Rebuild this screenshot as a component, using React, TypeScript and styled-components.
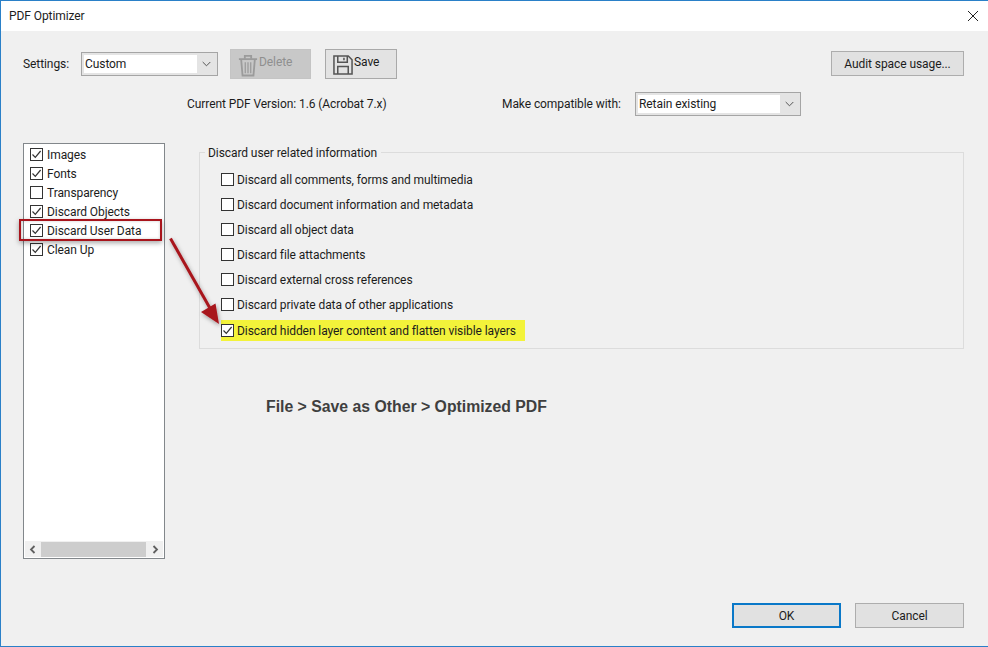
import React from "react";
import styled, { createGlobalStyle } from "styled-components";

const Global = createGlobalStyle`
  html, body { margin: 0; padding: 0; background: #f0f0f0; }
  * { box-sizing: border-box; }
  body { font-family: Roboto, "Noto Sans", sans-serif; font-size: 12px; letter-spacing: -0.08px; color: #1c1c1c; }
`;

const Dialog = styled.div`
  position: relative;
  width: 988px;
  height: 647px;
  background: #f0f0f0;
  border-top: 1px solid #2a80c8;
  border-left: 1px solid #2a80c8;
  border-bottom: 1px solid #2a80c8;
  display: flex;
  flex-direction: column;
  overflow: hidden;
`;
const TitleBar = styled.div`
  height: 30px;
  flex: none;
  background: #fff;
  display: flex;
  align-items: center;
  justify-content: space-between;
  padding: 0 9px 0 8px;
`;
const Title = styled.span`
  font-size: 12px;
`;
const Body = styled.div`
  flex: 1;
  display: flex;
  flex-direction: column;
  padding: 18px 24px 18px 22px;
`;
const TopRow = styled.div`
  height: 30px;
  display: flex;
  align-items: center;
`;
const Label = styled.span<{ $w: number }>`
  width: ${(p) => p.$w}px;
  flex: none;
  white-space: nowrap;
`;
const Select = styled.div<{ $w: number }>`
  width: ${(p) => p.$w}px;
  height: 24px;
  border: 1px solid #a5a5a5;
  background: #e4e4e4;
  padding: 2px;
  display: flex;
  align-items: stretch;
`;
const SelectValue = styled.div`
  flex: 1;
  background: #fff;
  padding-left: 1px;
  display: flex;
  align-items: center;
`;
const SelectArrow = styled.div`
  width: 18px;
  display: flex;
  align-items: center;
  justify-content: center;
`;
const ToolButton = styled.div<{ $w: number; $off?: boolean; $gap: number }>`
  width: ${(p) => p.$w}px;
  height: 30px;
  margin-left: ${(p) => p.$gap}px;
  border: 1px solid ${(p) => (p.$off ? "#c4c4c4" : "#a9a9a9")};
  background: ${(p) => (p.$off ? "#c8c8c8" : "#e3e3e3")};
  color: ${(p) => (p.$off ? "#8f8f8f" : "#1c1c1c")};
  display: flex;
  align-items: flex-start;
  padding: 4px 0 0 7px;
`;
const ToolText = styled.span`
  line-height: 16px;
  margin-left: 1px;
`;
const PushButton = styled.div<{ $w: number; $default?: boolean }>`
  width: ${(p) => p.$w}px;
  height: 25px;
  border: ${(p) => (p.$default ? "2px solid #0a78c8" : "1px solid #adadad")};
  background: #e1e1e1;
  display: flex;
  align-items: center;
  justify-content: center;
`;
const AuditSlot = styled.div`
  margin-left: auto;
  margin-top: -1px;
`;
const VersionRow = styled.div`
  height: 24px;
  margin-top: 13px;
  display: flex;
  align-items: center;
  padding-left: 164px;
`;
const Main = styled.div`
  flex: none;
  margin-top: 27px;
  height: 416px;
  display: flex;
  align-items: flex-start;
`;
const ListBox = styled.div`
  width: 142px;
  height: 416px;
  flex: none;
  background: #fff;
  border: 1px solid #82878b;
  display: flex;
  flex-direction: column;
  padding-top: 1px;
`;
const ListRows = styled.div`
  flex: 1;
`;
const ListRow = styled.div`
  height: 19px;
  display: flex;
  align-items: center;
  gap: 4px;
  padding-left: 6px;
`;
const ScrollBar = styled.div`
  height: 16px;
  margin: 0 1px 1px;
  background: #f0f0f0;
  display: flex;
  align-items: center;
  justify-content: space-between;
`;
const ScrollThumb = styled.div`
  flex: 1;
  height: 15px;
  background: #cdcdcd;
  margin: 0 2px 0 1px;
`;
const ScrollEnd = styled.div`
  width: 15px;
  display: flex;
  justify-content: center;
`;
const Right = styled.div`
  flex: 1;
  margin-left: 34px;
  display: flex;
  flex-direction: column;
`;
const Group = styled.div`
  position: relative;
  margin-top: 9px;
  height: 197px;
  border: 1px solid #dcdcdc;
  padding: 14px 0 0 21px;
  display: flex;
  flex-direction: column;
`;
const Legend = styled.div`
  position: absolute;
  top: -8px;
  left: 5px;
  padding: 0 4px 0 3px;
  background: #f0f0f0;
  line-height: 16px;
`;
const GroupRow = styled.div<{ $hi?: boolean }>`
  height: ${(p) => (p.$hi ? 21 : 25)}px;
  width: ${(p) => (p.$hi ? "304px" : "auto")};
  margin-top: ${(p) => (p.$hi ? "3px" : "0")};
  background: ${(p) => (p.$hi ? "#f3f33a" : "transparent")};
  display: flex;
  align-items: center;
  gap: 3px;
  white-space: nowrap;
`;
const Note = styled.div`
  margin: 49px 0 0 67px;
  font-family: "Liberation Sans", Arial, sans-serif;
  font-weight: 700;
  font-size: 15.8px;
  letter-spacing: 0;
  line-height: 18px;
  color: #3f3f3f;
`;
const Footer = styled.div`
  margin-top: auto;
  display: flex;
  justify-content: flex-end;
  gap: 14px;
`;
const Box = styled.div`
  width: 13px;
  height: 13px;
  flex: none;
  border: 1px solid #333;
  background: #fff;
  display: flex;
  align-items: center;
  justify-content: center;
`;
const RedMark = styled.div`
  position: absolute;
  left: 18px;
  top: 218px;
  width: 143px;
  height: 22px;
  border: 2px solid #a8141c;
  box-shadow: 0 2px 5px rgba(0, 0, 0, 0.35), inset 0 0 3px rgba(0, 0, 0, 0.2);
`;
const Arrow = styled.svg`
  position: absolute;
  left: 160px;
  top: 230px;
  overflow: visible;
`;

const Check = ({ on }: { on?: boolean }) => (
  <Box>
    {on && (
      <svg width="11" height="11" viewBox="0 0 11 11">
        <path d="M1.5 5.5 L4.3 8.4 L9.6 2" fill="none" stroke="#333" strokeWidth="1.2" />
      </svg>
    )}
  </Box>
);
const Chevron = () => (
  <svg width="9" height="6" viewBox="0 0 9 6">
    <path d="M.7 1 L4.5 4.8 L8.3 1" fill="none" stroke="#555" strokeWidth="1" />
  </svg>
);
const Trash = () => (
  <svg width="20" height="23" viewBox="0 0 22 25" style={{ flex: "none" }}>
    <g fill="none" stroke="#9b9b9b" strokeWidth="2">
      <path d="M1 5.5 H21" />
      <path d="M7.5 5 V2 H14.5 V5" />
      <path d="M3.5 6 L5 23.5 H17 L18.5 6" />
      <path d="M8 9 V21 M11 9 V21 M14 9 V21" strokeWidth="1.4" />
    </g>
  </svg>
);
const Floppy = () => (
  <svg width="20" height="20" viewBox="0 0 21 21" style={{ marginTop: 1, flex: "none" }}>
    <g fill="none" stroke="#555" strokeWidth="1.6">
      <path d="M1 1 H16 L20 5 V20 H1 Z" />
      <path d="M5 1 V7.5 H15 V1" />
      <path d="M5 20 V12 H16 V20" />
      <path d="M11.5 3 V5.5" />
    </g>
  </svg>
);

const listItems: [string, boolean][] = [
  ["Images", true],
  ["Fonts", true],
  ["Transparency", false],
  ["Discard Objects", true],
  ["Discard User Data", true],
  ["Clean Up", true],
];
const groupItems = [
  "Discard all comments, forms and multimedia",
  "Discard document information and metadata",
  "Discard all object data",
  "Discard file attachments",
  "Discard external cross references",
  "Discard private data of other applications",
];

export default function App() {
  return (
    <Dialog>
      <Global />
      <TitleBar>
        <Title>PDF Optimizer</Title>
        <svg width="12" height="12" viewBox="0 0 12 12">
          <path d="M1 1 L11 11 M11 1 L1 11" stroke="#222" strokeWidth="1" fill="none" />
        </svg>
      </TitleBar>
      <Body>
        <TopRow>
          <Label $w={58}>Settings:</Label>
          <Select $w={137}>
            <SelectValue>Custom</SelectValue>
            <SelectArrow><Chevron /></SelectArrow>
          </Select>
          <ToolButton $w={81} $off $gap={12}>
            <Trash />
            <ToolText>Delete</ToolText>
          </ToolButton>
          <ToolButton $w={72} $gap={14}>
            <Floppy />
            <ToolText>Save</ToolText>
          </ToolButton>
          <AuditSlot>
            <PushButton $w={133}>Audit space usage...</PushButton>
          </AuditSlot>
        </TopRow>
        <VersionRow>
          <Label $w={315}>Current PDF Version: 1.6 (Acrobat 7.x)</Label>
          <Label $w={133}>Make compatible with:</Label>
          <Select $w={166}>
            <SelectValue>Retain existing</SelectValue>
            <SelectArrow><Chevron /></SelectArrow>
          </Select>
        </VersionRow>
        <Main>
          <ListBox>
            <ListRows>
              {listItems.map(([t, on]) => (
                <ListRow key={t}>
                  <Check on={on} />
                  {t}
                </ListRow>
              ))}
            </ListRows>
            <ScrollBar>
              <ScrollEnd>
                <svg width="7" height="9" viewBox="0 0 7 9">
                  <path d="M5.5 1 L2 4.5 L5.5 8" fill="none" stroke="#606060" strokeWidth="1.8" />
                </svg>
              </ScrollEnd>
              <ScrollThumb />
              <ScrollEnd>
                <svg width="7" height="9" viewBox="0 0 7 9">
                  <path d="M1.5 1 L5 4.5 L1.5 8" fill="none" stroke="#606060" strokeWidth="1.8" />
                </svg>
              </ScrollEnd>
            </ScrollBar>
          </ListBox>
          <Right>
            <Group>
              <Legend>Discard user related information</Legend>
              {groupItems.map((t) => (
                <GroupRow key={t}>
                  <Check />
                  {t}
                </GroupRow>
              ))}
              <GroupRow $hi>
                <Check on />
                Discard hidden layer content and flatten visible layers
              </GroupRow>
            </Group>
            <Note>File &gt; Save as Other &gt; Optimized PDF</Note>
          </Right>
        </Main>
        <Footer>
          <PushButton $w={109} $default>OK</PushButton>
          <PushButton $w={109}>Cancel</PushButton>
        </Footer>
      </Body>
      <RedMark />
      <Arrow width="70" height="100" viewBox="0 0 70 100">
        <defs>
          <filter id="arrowShadow" x="-30%" y="-30%" width="160%" height="160%">
            <feDropShadow dx="1" dy="2" stdDeviation="2" floodColor="#000" floodOpacity="0.35" />
          </filter>
        </defs>
        <g filter="url(#arrowShadow)">
          <path d="M9.5 7.5 L50 79" stroke="#a8141c" strokeWidth="3" fill="none" />
          <path d="M58 93 L40 81 L54.5 72.5 Z" fill="#a8141c" />
        </g>
      </Arrow>
    </Dialog>
  );
}
